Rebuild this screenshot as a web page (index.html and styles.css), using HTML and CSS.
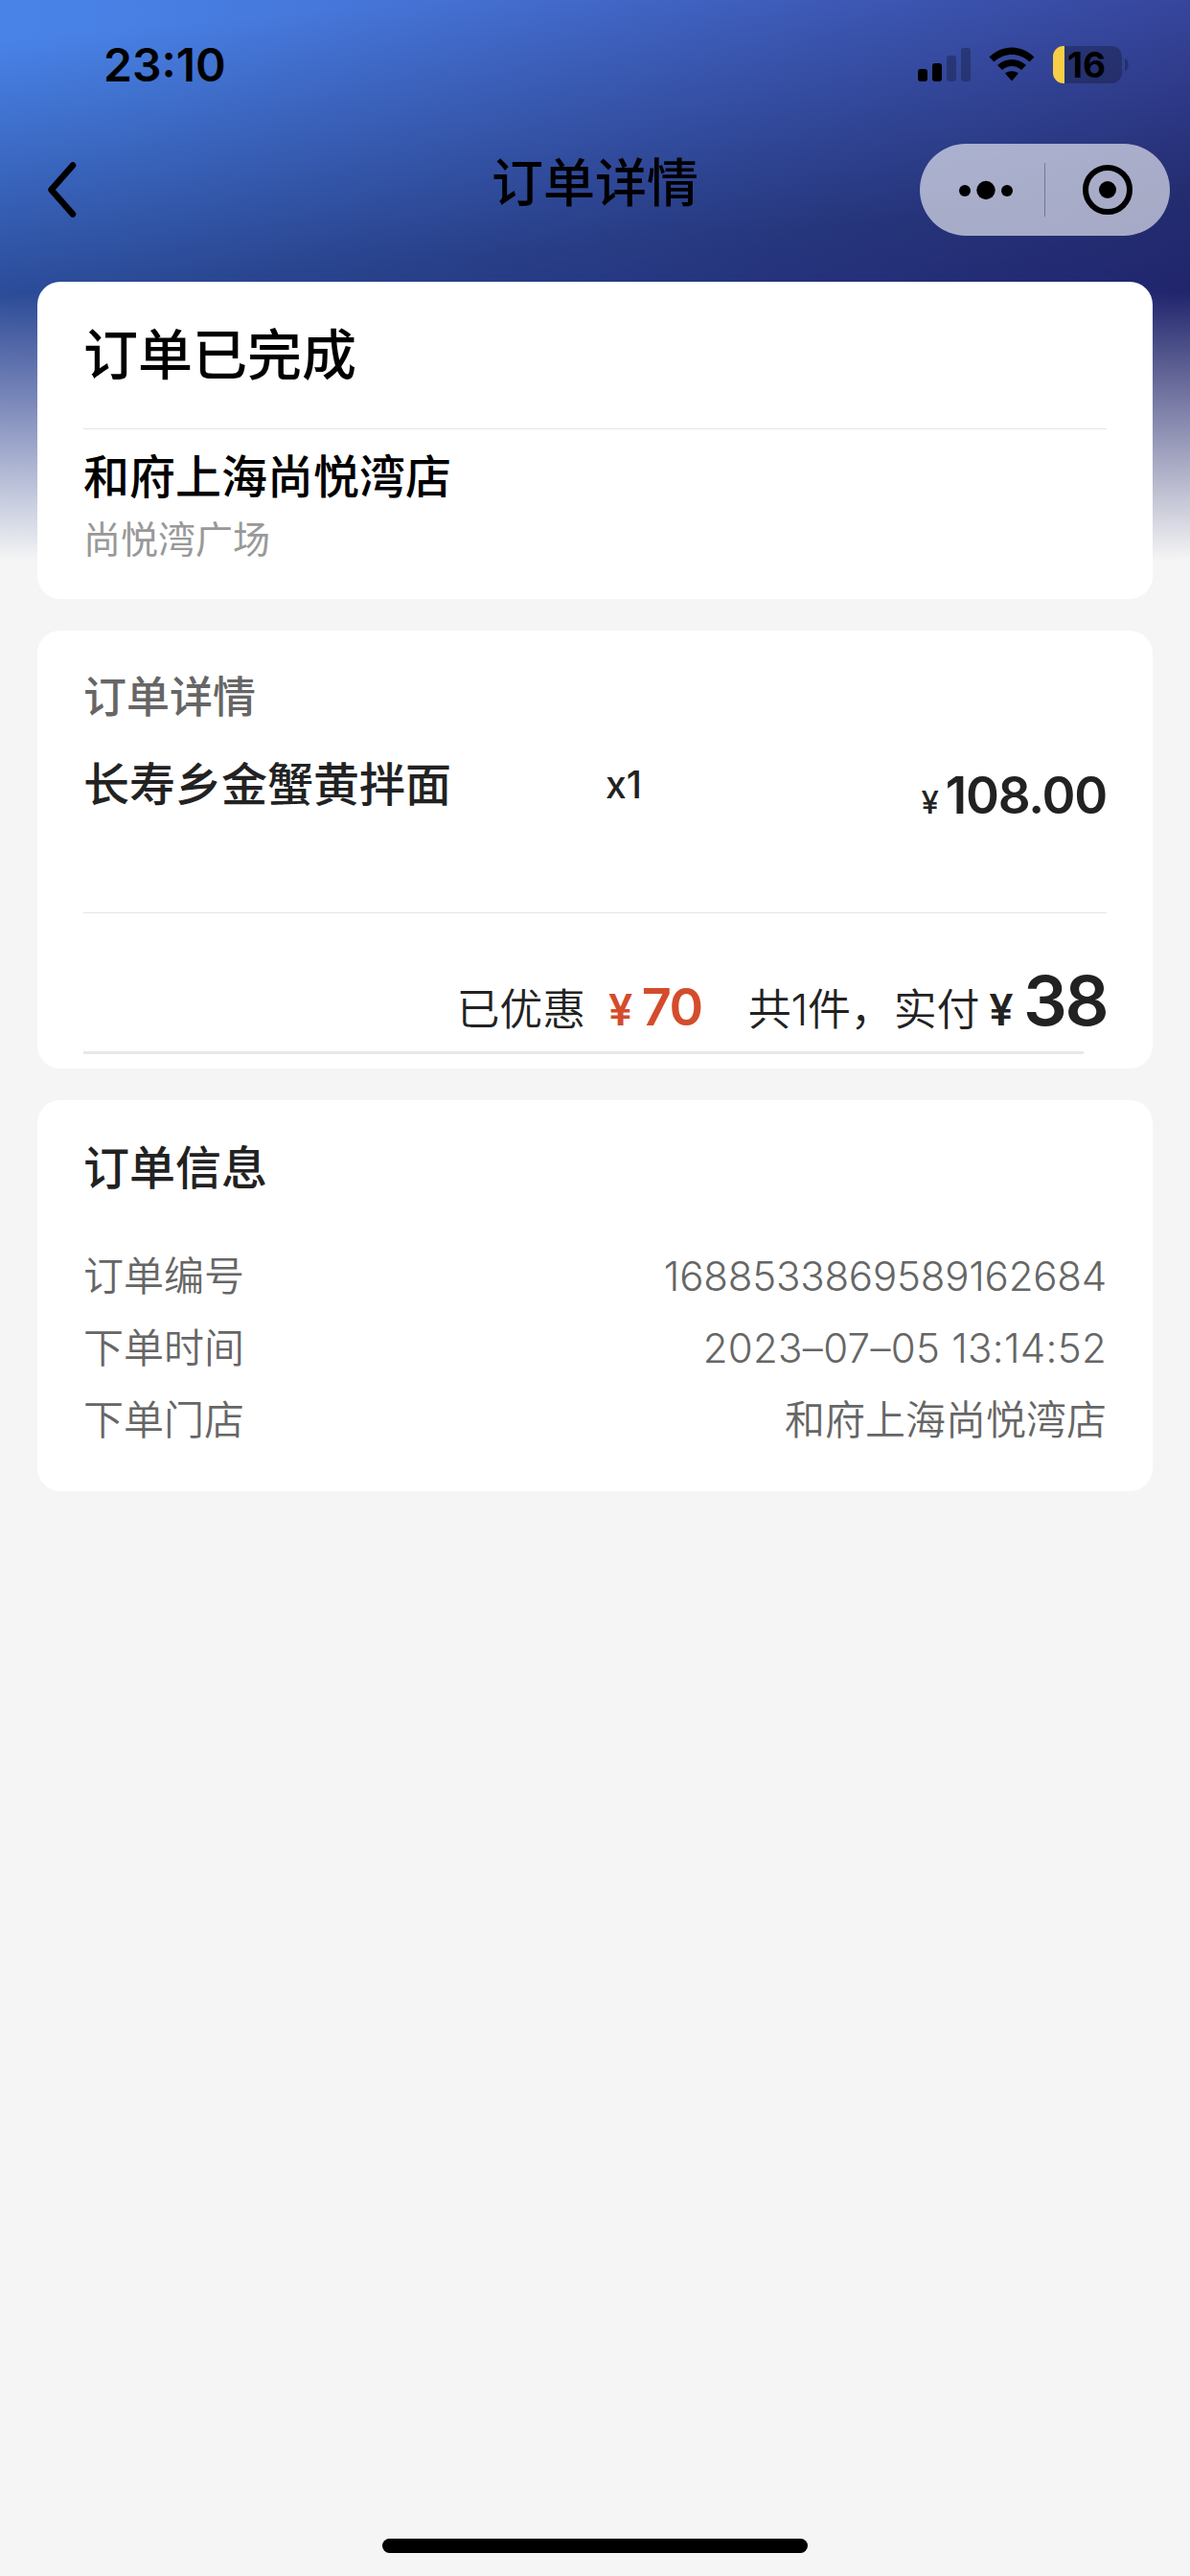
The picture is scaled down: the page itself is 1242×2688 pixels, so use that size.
FILE: index.html
```html
<!DOCTYPE html>
<html lang="zh-CN">
<head>
  <meta charset="UTF-8">
  <meta name="viewport" content="width=device-width, initial-scale=1.0">
  <title>订单详情</title>
  <link rel="stylesheet" href="styles.css">
</head>
<body>

  <div class="page">
    <header class="header">
      <div class="status-bar">
        <span class="time">23:10</span>
        <div class="status-icons">
          <svg class="signal" width="56" height="36" viewBox="0 0 56 36">
            <rect x="0" y="22" width="10" height="13" rx="3"/>
            <rect x="15" y="16" width="10" height="19" rx="3"/>
            <rect x="30" y="8" width="10" height="27" rx="3" opacity="0.25"/>
            <rect x="45" y="0" width="10" height="35" rx="3" opacity="0.25"/>
          </svg>
          <svg class="wifi" width="48" height="36" viewBox="0 0 48 36">
            <path d="M0.5 10.5C14-3 34-3 47.5 10.5L42.5 15.5C32 5.5 16 5.5 5.5 15.5Z"/>
            <path d="M9 19C17.5 11 30.5 11 39 19L34 24C28 18.5 20 18.5 14 24Z"/>
            <path d="M17 27.5C21 24.5 27 24.5 31 27.5L24 35.5Z"/>
          </svg>
          <div class="battery">
            <div class="battery-body"><span>16</span></div>
            <svg width="4" height="13" viewBox="0 0 4 13"><path d="M0 0C5 2 5 11 0 13Z" opacity="0.25"/></svg>
          </div>
        </div>
      </div>

      <div class="nav-bar">
        <svg class="back" width="30" height="58" viewBox="0 0 30 58">
          <path d="M26 3.5L3.5 29L26 54.5" fill="none" stroke="#000" stroke-width="6.5" stroke-linecap="round" stroke-linejoin="round"/>
        </svg>
        <h1 class="nav-title">订单详情</h1>
        <div class="capsule">
          <svg width="261" height="96" viewBox="0 0 261 96">
            <circle cx="47" cy="49" r="6"/>
            <circle cx="69" cy="48.5" r="9.7"/>
            <circle cx="91" cy="49" r="6"/>
            <rect x="130" y="20" width="1" height="56" opacity="0.3"/>
            <circle cx="196" cy="48" r="23" fill="none" stroke="#000" stroke-width="6"/>
            <circle cx="196" cy="48" r="9"/>
          </svg>
        </div>
      </div>
    </header>

    <main class="content">
      <section class="card status-card">
        <h2 class="order-status">订单已完成</h2>
        <div class="shop-name">和府上海尚悦湾店</div>
        <div class="shop-address">尚悦湾广场</div>
      </section>

      <section class="card detail-card">
        <h3 class="detail-title">订单详情</h3>
        <div class="goods">
          <span class="goods-name">长寿乡金蟹黄拌面</span>
          <span class="goods-count">x1</span>
          <span class="goods-price"><small>¥</small>108.00</span>
        </div>
        <div class="total">
          <span class="total-label">已优惠</span>
          <span class="discount"><small>¥</small>70</span>
          <span class="total-label">共<i>1</i>件，实付</span>
          <span class="paid"><small>¥</small>38</span>
        </div>
        <div class="bottom-line"></div>
      </section>

      <section class="card info-card">
        <h3 class="info-title">订单信息</h3>
        <div class="info-row">
          <span>订单编号</span>
          <span class="order-no">1688533869589162684</span>
        </div>
        <div class="info-row">
          <span>下单时间</span>
          <span class="order-time">2023–07–05 13:14:52</span>
        </div>
        <div class="info-row">
          <span>下单门店</span>
          <span>和府上海尚悦湾店</span>
        </div>
      </section>
    </main>

    <div class="home-indicator"></div>
  </div>

</body>
</html>
```
FILE: styles.css
```css
* {
  box-sizing: border-box;
}

body {
  margin: 0;
  background-color: #f5f5f5;
  font-family: Inter, 'Noto Sans CJK SC', sans-serif;
  color: #222;
}

h1, h2, h3 {
  margin: 0;
}

.page {
  height: 2688px;
  display: flex;
  flex-direction: column;
  background:
    linear-gradient(to bottom, rgba(245, 245, 245, 0) 305px, #f5f5f5 585px),
    linear-gradient(175deg, #fff 40px, #9691a6 310px, #8878a0 418px),
    linear-gradient(to right, #4983e8 0, #4880e4 130px, #3d4eac 1242px);
  background-size: 100% 586px;
  background-repeat: no-repeat;
  background-blend-mode: normal, multiply, normal;
}

/* status bar */
.status-bar {
  height: 132px;
  padding: 0 64px 0 108px;
  display: flex;
  justify-content: space-between;
  align-items: flex-start;
}

.time {
  margin-top: 38px;
  font-size: 48px;
  line-height: 60px;
  font-weight: 600;
  color: #000;
}

.status-icons {
  margin-top: 48px;
  display: flex;
  align-items: flex-start;
}

.signal {
  margin: 2px 18px 0 0;
}

.wifi {
  margin: 1px 19px 0 0;
}

.battery {
  display: flex;
  align-items: center;
  gap: 3px;
}

.battery-body {
  width: 72px;
  height: 39px;
  padding-left: 15px;
  border-radius: 11px;
  background: linear-gradient(to right, #f7ce46 12px, rgba(0, 0, 0, 0.25) 12px);
  font-size: 37px;
  line-height: 39px;
  font-weight: 650;
  color: #000;
}

/* navigation bar */
.nav-bar {
  height: 162px;
  padding: 18px 21px 0 50px;
  display: grid;
  grid-template-columns: 261px 1fr 261px;
  align-items: start;
}

.back {
  margin-top: 19px;
}

.nav-title {
  margin-top: 12px;
  padding-right: 29px;
  font-size: 54px;
  line-height: 60px;
  font-weight: 500;
  text-align: center;
  color: #000;
}

.capsule {
  height: 96px;
  border-radius: 48px;
  background-color: rgba(255, 255, 255, 0.6);
}

.capsule svg {
  display: block;
}

/* cards */
.content {
  flex: 1;
  padding: 0 39px;
}

.card {
  padding: 0 48px;
  border-radius: 24px;
  background-color: #fff;
}

.status-card {
  height: 331px;
  margin-bottom: 33px;
}

.order-status {
  height: 154px;
  padding-top: 37px;
  border-bottom: 1px solid #e5e5e5;
  font-size: 57px;
  line-height: 80px;
  font-weight: 500;
  color: #000;
}

.shop-name {
  padding-top: 20px;
  font-size: 48px;
  line-height: 60px;
  font-weight: 500;
  color: #000;
}

.shop-address {
  padding-top: 10px;
  font-size: 39px;
  line-height: 50px;
  color: #999;
}

.detail-card {
  height: 457px;
  margin-bottom: 33px;
}

.detail-title {
  padding-top: 40px;
  font-size: 45px;
  line-height: 60px;
  font-weight: 500;
  color: #666;
}

.goods {
  height: 195px;
  padding-top: 31px;
  border-bottom: 1px solid #e5e5e5;
  display: grid;
  grid-template-columns: 545px 1fr auto;
  align-items: start;
}

.goods-name {
  font-size: 48px;
  line-height: 60px;
  font-weight: 500;
}

.goods-count {
  font-size: 39px;
  line-height: 60px;
  font-weight: 500;
}

.goods-price {
  padding-top: 11px;
  font-size: 53px;
  line-height: 60px;
  font-weight: 580;
  letter-spacing: -1.2px;
}

.goods-price small {
  margin-right: 8px;
  font-size: 33px;
  font-weight: 500;
}

.total {
  height: 144px;
  display: flex;
  justify-content: flex-end;
  align-items: baseline;
  padding-top: 51px;
}

.total-label {
  font-size: 45px;
  font-family: 'Noto Sans CJK SC', sans-serif;
  font-weight: 350;
  letter-spacing: -0.2px;
}

.total-label i {
  font-family: Inter, sans-serif;
  font-style: normal;
}

.total small {
  font-size: 45px;
}

.discount {
  margin: 0 48px 0 24px;
  font-size: 54px;
  font-weight: 580;
  letter-spacing: -1.5px;
  color: #d44c2c;
}

.discount small {
  margin-right: 11px;
}

.paid {
  margin-left: 10px;
  font-size: 72px;
  line-height: 80px;
  font-weight: 580;
  letter-spacing: -2.5px;
}

.paid small {
  margin-right: 13px;
}

.bottom-line {
  width: 1044px;
  height: 3px;
  background-color: #e8e8e8;
}

.info-card {
  height: 408px;
  padding-top: 41px;
}

.info-title {
  margin-bottom: 45px;
  font-size: 48px;
  line-height: 60px;
  font-weight: 500;
}

.info-row {
  height: 75px;
  display: flex;
  justify-content: space-between;
  font-size: 42px;
  line-height: 75px;
  font-weight: 350;
  color: #666;
}

.order-no {
  letter-spacing: -0.2px;
}

.order-time {
  letter-spacing: 0.3px;
}

.home-indicator {
  width: 444px;
  height: 15px;
  margin: 0 auto 24px;
  border-radius: 8px;
  background-color: #000;
}
```
